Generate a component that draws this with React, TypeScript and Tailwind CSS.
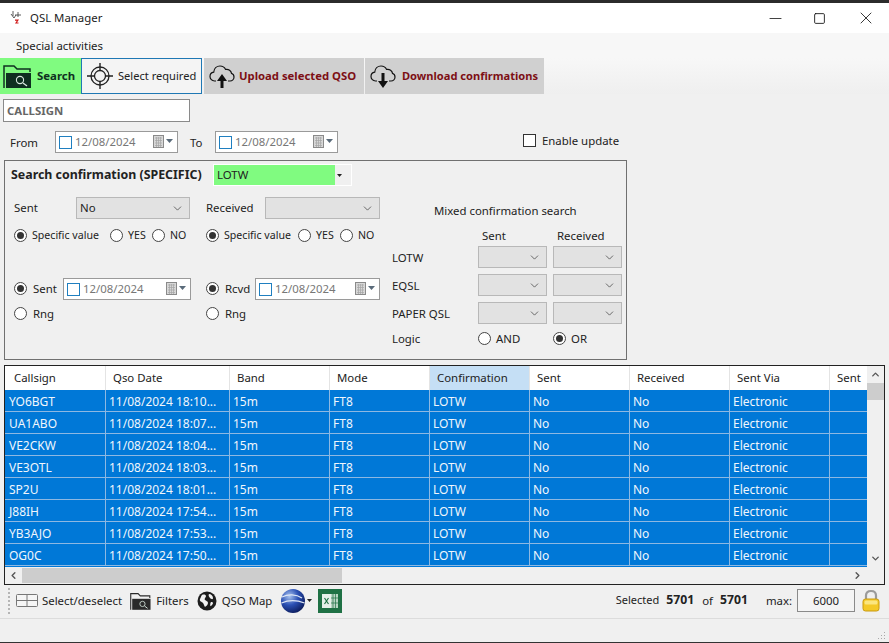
import { ChevronDown, ChevronLeft, ChevronRight, ChevronUp, Minus, Square, X } from 'lucide-react';

const rows = [
  ['YO6BGT', '11/08/2024 18:10...'],
  ['UA1ABO', '11/08/2024 18:07...'],
  ['VE2CKW', '11/08/2024 18:04...'],
  ['VE3OTL', '11/08/2024 18:03...'],
  ['SP2U', '11/08/2024 18:01...'],
  ['J88IH', '11/08/2024 17:54...'],
  ['YB3AJO', '11/08/2024 17:53...'],
  ['OG0C', '11/08/2024 17:50...'],
];

const columns = [
  { name: 'Callsign', width: 'w-[100px]' },
  { name: 'Qso Date', width: 'w-[124px]' },
  { name: 'Band', width: 'w-[100px]' },
  { name: 'Mode', width: 'w-[100px]' },
  { name: 'Confirmation', width: 'w-[100px]' },
  { name: 'Sent', width: 'w-[100px]' },
  { name: 'Received', width: 'w-[100px]' },
  { name: 'Sent Via', width: 'w-[100px]' },
  { name: 'Sent', width: 'w-[38px]' },
];

function Radio({ checked, label, wide, className }: { checked?: boolean; label: string; wide?: boolean; className?: string }) {
  return (
    <div className={`flex items-center ${wide ? 'gap-[6px]' : 'gap-[5px]'} ${className ?? ''}`}>
      <span className="flex h-[13px] w-[13px] shrink-0 items-center justify-center rounded-full border border-[#444] bg-white">
        {checked && <span className="h-[7px] w-[7px] rounded-full bg-[#333]" />}
      </span>
      <span>{label}</span>
    </div>
  );
}

function Select({ value, className }: { value?: string; className?: string }) {
  return (
    <div className={`flex h-[22px] items-center justify-between border border-[#b8b8b8] bg-[#e2e2e2] pl-[3px] pr-[5px] ${className ?? ''}`}>
      <span>{value}</span>
      <ChevronDown className="h-[13px] w-[13px] text-[#444]" strokeWidth={1.4} />
    </div>
  );
}

function CalendarIcon() {
  return (
    <svg width="12" height="14" viewBox="0 0 12 14" className="shrink-0">
      <rect x="0.5" y="0.5" width="10" height="12" fill="#d8d8d8" stroke="#8a8a8a" />
      <path d="M2 3h7M2 5.5h7M2 8h7M2 10.5h7M3.5 2v10M5.5 2v10M7.5 2v10" stroke="#a5a5a5" strokeWidth="0.7" />
    </svg>
  );
}

function DateBox({ className }: { className?: string }) {
  return (
    <div className={`flex h-[22px] items-center border border-[#9a9a9a] bg-white pl-[3px] pr-[4px] text-[#777] ${className ?? ''}`}>
      <span className="h-[13px] w-[13px] shrink-0 border border-[#1f7fc0]" />
      <span className="ml-[3px] flex-1">12/08/2024</span>
      <CalendarIcon />
      <svg width="7" height="4" viewBox="0 0 7 4" className="ml-[1px] mb-[2px]">
        <path d="M0 0h7L3.5 4z" fill="#5a6b7a" />
      </svg>
    </div>
  );
}

function FolderIcon({ size = 30, color = '#0f3020' }: { size?: number; color?: string }) {
  return (
    <svg width={size} height={size} viewBox="0 0 30 30" className="shrink-0">
      <path d="M1 27V5h10l3 3h13v3" fill="none" stroke={color} strokeWidth="1.5" />
      <path d="M3 27V12h25v15z" fill={color} />
      <circle cx="17" cy="19" r="3.6" fill="none" stroke="#d9e8df" strokeWidth="1.1" />
      <path d="M20 22l4 3" stroke="#d9e8df" strokeWidth="1.3" />
    </svg>
  );
}

function CloudIcon({ down }: { down?: boolean }) {
  return (
    <svg width="26" height="26" viewBox="0 0 26 26" className="shrink-0">
      <path
        d="M7 18H5.5C3 18 1 16 1 13.5 1 11.2 2.600 9.500 4.700 9.200 5 5.500 7.700 3 11 3c2.600 0 4.600 1.400 5.600 3.400 3-.6 5.600 1.300 5.900 4C24 10.900 25 12.400 25 14c0 2.300-1.800 4-4 4h-2"
        fill="none"
        stroke="#111"
        strokeWidth="1.2"
      />
      {down ? (
        <path d="M11.500 10h3v8h3.500L13 25l-5-7h3.500z" fill="#111" />
      ) : (
        <path d="M13 11l5 7h-3.500v7h-3v-7H8z" fill="#111" />
      )}
    </svg>
  );
}

function TargetIcon() {
  return (
    <svg width="28" height="28" viewBox="0 0 28 28" className="shrink-0">
      <circle cx="14" cy="14" r="9" fill="none" stroke="#222" strokeWidth="1.3" />
      <circle cx="14" cy="14" r="5.500" fill="none" stroke="#222" strokeWidth="1.3" />
      <path d="M14 1v7M14 20v7M1 14h7M20 14h7" stroke="#222" strokeWidth="1.4" />
    </svg>
  );
}

function AppIcon() {
  return (
    <svg width="12" height="15" viewBox="0 0 12 15" className="shrink-0">
      <path d="M3 0v5M8 1v5M5 4h6M1 3l3 4 2-3" fill="none" stroke="#333" strokeWidth="0.8" />
      <path d="M5 9h3l-2 3h2.500M6 9v1" fill="none" stroke="#d01818" strokeWidth="1.1" />
    </svg>
  );
}

function GlobeIcon() {
  return (
    <svg width="20" height="20" viewBox="0 0 20 20" className="shrink-0">
      <circle cx="10" cy="10" r="9.500" fill="#1d1d1d" />
      <path d="M5 4c2-1 4 0 4 1S7 8 8 9s3 1 3 3-2 3-3 4c-1-1-1-3-2-4S2 10 3 8s1-3 2-4zM12 3c2 0 4 2 4 4s-2 1-3 0-2-3-1-4zM14 11c1 0 2 0 2 1s-1 2-2 3-1-3 0-4z" fill="#f2f2f2" />
    </svg>
  );
}

function EarthIcon() {
  return (
    <svg width="24" height="24" viewBox="0 0 24 24" className="shrink-0">
      <defs>
        <radialGradient id="earth" cx="35%" cy="30%" r="75%">
          <stop offset="0" stopColor="#a9c4ef" />
          <stop offset="0.5" stopColor="#2b50b4" />
          <stop offset="1" stopColor="#0c1c5c" />
        </radialGradient>
      </defs>
      <circle cx="12" cy="12" r="12" fill="url(#earth)" />
      <path d="M1 8c6-3 14-3 20 1M0.500 14c7-3 15-3 23 0" fill="none" stroke="#dfe8f7" strokeWidth="1.300" />
    </svg>
  );
}

function ExcelIcon() {
  return (
    <svg width="24" height="24" viewBox="0 0 24 24" className="shrink-0">
      <rect width="24" height="24" fill="#1f7145" />
      <rect x="13" y="5" width="7" height="14" fill="#b9d5c4" />
      <path d="M15 5v14M17.500 5v14M13 9h7M13 14h7" stroke="#1f7145" strokeWidth="0.7" />
      <rect x="4" y="5" width="9" height="14" fill="#e6f0ea" />
      <path d="M6.500 9l4 6M10.500 9l-4 6" stroke="#1f7145" strokeWidth="1.200" />
    </svg>
  );
}

function LockIcon() {
  return (
    <svg width="18" height="24" viewBox="0 0 18 24" className="shrink-0">
      <path d="M4 11V6.500C4 3.500 6 2 9 2s5 1.500 5 4.500V11" fill="none" stroke="#9b9b9b" strokeWidth="2.200" />
      <rect x="1" y="10" width="16" height="12" rx="2.500" fill="#f4c928" stroke="#c99a10" />
      <rect x="2.500" y="11.500" width="13" height="4" rx="1.500" fill="#fbe680" />
    </svg>
  );
}

function SelectIcon() {
  return (
    <svg width="22" height="15" viewBox="0 0 22 15" className="shrink-0">
      <rect x="0.500" y="1.500" width="21" height="12" rx="1" fill="#f5f5f5" stroke="#777" />
      <path d="M0.500 7.500h21M11 1.500v12" stroke="#777" />
    </svg>
  );
}

export default function App() {
  return (
    <div className="flex h-[643px] w-[889px] flex-col overflow-hidden bg-[#f0f0f0] font-['Noto_Sans',sans-serif] text-[11.4px] text-[#222]">
      <div className="h-[3px] shrink-0 bg-[#2b2b2b]" />

      <div className="flex h-[30px] shrink-0 items-center bg-white pl-[10px]">
        <AppIcon />
        <span className="ml-[8px] text-[#1c1c1c]">QSL Manager</span>
        <div className="ml-auto flex items-center text-[#111]">
          <Minus className="mr-[28px] h-[19px] w-[19px]" strokeWidth={1} />
          <Square className="mr-[30px] h-[13px] w-[13px]" strokeWidth={1.6} />
          <X className="mr-[13px] h-[20px] w-[20px]" strokeWidth={1} />
        </div>
      </div>

      <div className="flex h-[25px] shrink-0 items-center bg-[#f7f7f7] pl-[16px]">Special activities</div>

      <div className="flex h-[36px] shrink-0 items-stretch gap-[3px] whitespace-nowrap bg-gradient-to-b from-[#f7f7f7] to-[#efefef] text-[11.1px]">
        <div className="flex w-[81px] items-center gap-[4px] bg-[#80fb80] pl-[3px] text-[11.4px] font-bold text-[#0f3020]">
          <FolderIcon />
          <span>Search</span>
        </div>
        <div className="-ml-[3px] flex w-[121px] items-center gap-[4px] border border-[#1f78b4] bg-[#f4f4f4] pl-[4px]">
          <TargetIcon />
          <span>Select required</span>
        </div>
        <div className="-ml-[1px] flex w-[160px] items-center gap-[4px] bg-[#d0d0d0] pl-[5px] text-[11.3px] font-bold text-[#7d0f15]">
          <CloudIcon />
          <span>Upload selected QSO</span>
        </div>
        <div className="-ml-[2px] flex w-[179px] items-center gap-[6px] bg-[#d0d0d0] pl-[5px] font-bold text-[#7d0f15]">
          <CloudIcon down />
          <span>Download confirmations</span>
        </div>
      </div>

      <div className="mt-[5px] ml-[3px] flex h-[23px] w-[187px] shrink-0 items-center border border-[#8a8a8a] bg-white pl-[3px] font-bold text-[#666]">
        CALLSIGN
      </div>

      <div className="mt-[9px] ml-[10px] flex h-[22px] shrink-0 items-center">
        <span className="w-[45px] pt-[1px]">From</span>
        <DateBox className="w-[123px]" />
        <span className="ml-[12px] w-[25px] pt-[1px]">To</span>
        <DateBox className="w-[123px]" />
        <div className="mb-[3px] ml-[185px] flex items-center gap-[6px]">
          <span className="h-[13px] w-[13px] border border-[#333] bg-white" />
          <span>Enable update</span>
        </div>
      </div>

      <div className="mt-[7px] ml-[4px] flex h-[200px] w-[623px] shrink-0 border border-[#707070]">
        <div className="w-[381px] shrink-0 pl-[6px]">
          <div className="mt-[2px] flex h-[24px] items-center">
            <span className="w-[202px] text-[12.4px] font-bold leading-none whitespace-nowrap">Search confirmation (SPECIFIC)</span>
            <div className="flex h-[22px] w-[139px] items-center border border-white pr-[9px]">
              <span className="flex h-[20px] w-[121px] items-center bg-[#80fb80] pl-[3px]">LOTW</span>
              <svg width="5" height="3" viewBox="0 0 5 3" className="ml-auto">
                <path d="M0 0h5L2.500 3z" fill="#222" />
              </svg>
            </div>
          </div>

          <div className="mt-[10px] flex items-center">
            <span className="ml-[3px] w-[62px]">Sent</span>
            <Select value="No" className="w-[114px]" />
            <span className="ml-[16px] w-[59px]">Received</span>
            <Select className="w-[115px]" />
          </div>

          <div className="mt-[6px] flex h-[22px] items-center text-[10.6px]">
            <Radio checked label="Specific value" className="ml-[3px] w-[96px]" />
            <Radio label="YES" className="w-[42px]" />
            <Radio label="NO" className="w-[54px]" />
            <Radio checked label="Specific value" className="w-[92px]" />
            <Radio label="YES" className="w-[42px]" />
            <Radio label="NO" />
          </div>

          <div className="mt-[31px] flex h-[22px] items-center">
            <Radio checked wide label="Sent" className="ml-[3px] w-[49px]" />
            <DateBox className="w-[128px]" />
            <Radio checked wide label="Rcvd" className="ml-[15px] w-[49px]" />
            <DateBox className="w-[125px]" />
          </div>

          <div className="mt-[3px] flex h-[22px] items-center">
            <Radio wide label="Rng" className="ml-[3px] w-[192px]" />
            <Radio wide label="Rng" />
          </div>
        </div>

        <div className="flex-1 pl-[6px]">
          <div className="mt-[41px] pl-[42px] whitespace-nowrap">Mixed confirmation search</div>
          <div className="mt-[8px] flex h-[17px] items-center">
            <span className="ml-[90px] w-[75px]">Sent</span>
            <span>Received</span>
          </div>
          <div className="h-[2px]" />
          {['LOTW', 'EQSL', 'PAPER QSL'].map(name => (
            <div key={name} className="mb-[6px] flex items-center">
              <span className="w-[86px]">{name}</span>
              <Select className="w-[69px]" />
              <Select className="ml-[6px] w-[69px]" />
            </div>
          ))}
          <div className="mt-[1px] flex h-[16px] items-center">
            <span className="w-[86px]">Logic</span>
            <Radio label="AND" className="w-[75px]" />
            <Radio checked label="OR" />
          </div>
        </div>
      </div>

      <div className="mt-[5px] ml-[4px] flex h-[220px] w-[881px] shrink-0 flex-col border border-[#222] bg-white">
        <div className="flex min-h-0 flex-1">
          <div className="min-w-0 flex-1 overflow-hidden">
            <div className="flex h-[24px]">
              {columns.map((col, i) => (
                <div
                  key={i}
                  className={`flex shrink-0 items-center overflow-hidden whitespace-nowrap ${col.width} ${i === 0 ? 'pl-[9px]' : 'border-l border-[#e4e4e4] pl-[7px]'} ${col.name === 'Confirmation' ? 'bg-[#c5dff5]' : ''}`}
                >
                  {col.name}
                </div>
              ))}
            </div>
            {rows.map(([call, date]) => (
              <div key={call} className="flex h-[22px] border-b border-[#8db8e2] bg-[#0078d7] text-[12px] text-[#f0f6fc]">
                {[call, date, '15m', 'FT8', 'LOTW', 'No', 'No', 'Electronic', ''].map((value, i) => (
                  <div
                    key={i}
                    className={`flex shrink-0 items-center overflow-hidden pt-[2px] whitespace-nowrap ${columns[i].width} ${i === 0 ? 'pl-[4px]' : 'border-l border-[#8db8e2] pl-[3px]'}`}
                  >
                    {value}
                  </div>
                ))}
              </div>
            ))}
            <div className="h-[2px] bg-[#0078d7]" />
          </div>
          <div className="flex w-[17px] shrink-0 flex-col bg-[#f0f0f0] text-[#555]">
            <div className="flex h-[17px] items-center justify-center">
              <ChevronUp className="h-[11px] w-[11px]" strokeWidth={3} />
            </div>
            <div className="h-[17px] bg-[#cdcdcd]" />
            <div className="flex-1" />
            <div className="flex h-[17px] items-center justify-center">
              <ChevronDown className="h-[11px] w-[11px]" strokeWidth={3} />
            </div>
          </div>
        </div>
        <div className="flex h-[17px] shrink-0 items-center bg-[#f0f0f0] text-[#555]">
          <div className="flex w-[17px] items-center justify-center">
            <ChevronLeft className="h-[11px] w-[11px]" strokeWidth={3} />
          </div>
          <div className="h-[15px] w-[320px] bg-[#cdcdcd]" />
          <div className="ml-auto flex w-[34px] items-center justify-start pl-[2px]">
            <ChevronRight className="h-[11px] w-[11px]" strokeWidth={3} />
          </div>
        </div>
      </div>

      <div className="flex h-[34px] shrink-0 items-center border-b border-[#dcdcdc] pb-[2px] pl-[8px]">
        <span className="mr-[6px] h-[26px] border-l-2 border-dotted border-[#b5b5b5]" />
        <SelectIcon />
        <span className="ml-[4px]">Select/deselect</span>
        <span className="ml-[8px]">
          <FolderIcon size={22} color="#2a2a2a" />
        </span>
        <span className="ml-[4px]">Filters</span>
        <span className="ml-[8px]">
          <GlobeIcon />
        </span>
        <span className="ml-[5px]">QSO Map</span>
        <span className="ml-[9px]">
          <EarthIcon />
        </span>
        <svg width="5" height="3" viewBox="0 0 5 3" className="ml-[2px]">
          <path d="M0 0h5L2.500 3z" fill="#222" />
        </svg>
        <span className="ml-[6px]">
          <ExcelIcon />
        </span>
        <span className="ml-auto text-[11px]">Selected</span>
        <span className="ml-[7px] text-[12.2px] font-bold">5701</span>
        <span className="ml-[8px]">of</span>
        <span className="ml-[7px] text-[12.2px] font-bold">5701</span>
        <span className="ml-[18px]">max:</span>
        <div className="ml-[5px] flex h-[23px] w-[58px] items-center justify-center border border-[#8a8a8a] bg-[#f4f4f4]">6000</div>
        <span className="mr-[9px] ml-[7px]">
          <LockIcon />
        </span>
      </div>

      <div className="flex flex-1 items-end justify-end">
        <svg width="10" height="10" viewBox="0 0 10 10" className="mr-[3px] mb-[1px]">
          <path d="M8 1h1v1H8zM5 4h1v1H5zM8 4h1v1H8zM2 7h1v1H2zM5 7h1v1H5zM8 7h1v1H8z" fill="#a8a8a8" />
        </svg>
      </div>
      <div className="h-px shrink-0 bg-[#333]" />
    </div>
  );
}
